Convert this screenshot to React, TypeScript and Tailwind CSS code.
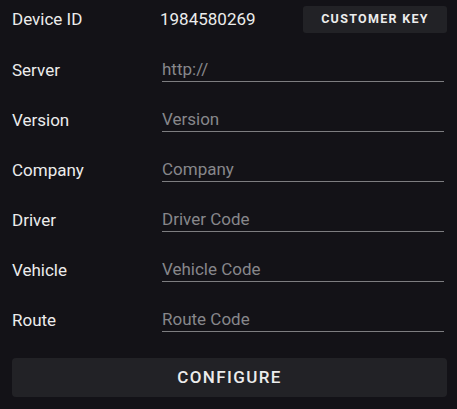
import { useState } from 'react'

const fields = [
  { label: 'Server', placeholder: 'http://' },
  { label: 'Version', placeholder: 'Version' },
  { label: 'Company', placeholder: 'Company' },
  { label: 'Driver', placeholder: 'Driver Code' },
  { label: 'Vehicle', placeholder: 'Vehicle Code' },
  { label: 'Route', placeholder: 'Route Code' },
]

export default function App() {
  const [values, setValues] = useState<Record<string, string>>({})

  return (
    <div
      className="w-[457px] h-[409px] bg-[#131217] text-[#ececec] pl-3 pr-[10px] pt-[6px]"
      style={{ fontFamily: 'Roboto, "Noto Sans", sans-serif' }}
    >
      <div className="flex items-center h-[27px]">
        <span className="w-[150px] text-[17px]">Device ID</span>
        <span className="flex-1 text-[17px] -ml-[2px]">1984580269</span>
        <button className="w-[144px] h-[27px] rounded-[3px] bg-[#222226] text-[12.5px] font-bold tracking-[1.3px] text-[#ececec]">
          CUSTOMER KEY
        </button>
      </div>

      <div className="mt-[12px]">
        {fields.map((f) => (
          <div key={f.label} className="flex items-center h-[50px]">
            <label className="w-[150px] text-[17px] leading-[22px] pb-[1px]">{f.label}</label>
            <input
              className="flex-1 mr-[3px] h-[23px] leading-[20px] pb-[1px] text-[17px] bg-transparent outline-none border-b border-[#7d7d80] text-[#ececec] placeholder:text-[#87878b]"
              placeholder={f.placeholder}
              value={values[f.label] ?? ''}
              onChange={(e) => setValues({ ...values, [f.label]: e.target.value })}
            />
          </div>
        ))}
      </div>

      <button className="mt-[13px] w-full h-[39px] rounded-[4px] bg-[#222226] text-[17px] font-medium tracking-[1.4px] text-[#ececec]">
        CONFIGURE
      </button>
    </div>
  )
}
